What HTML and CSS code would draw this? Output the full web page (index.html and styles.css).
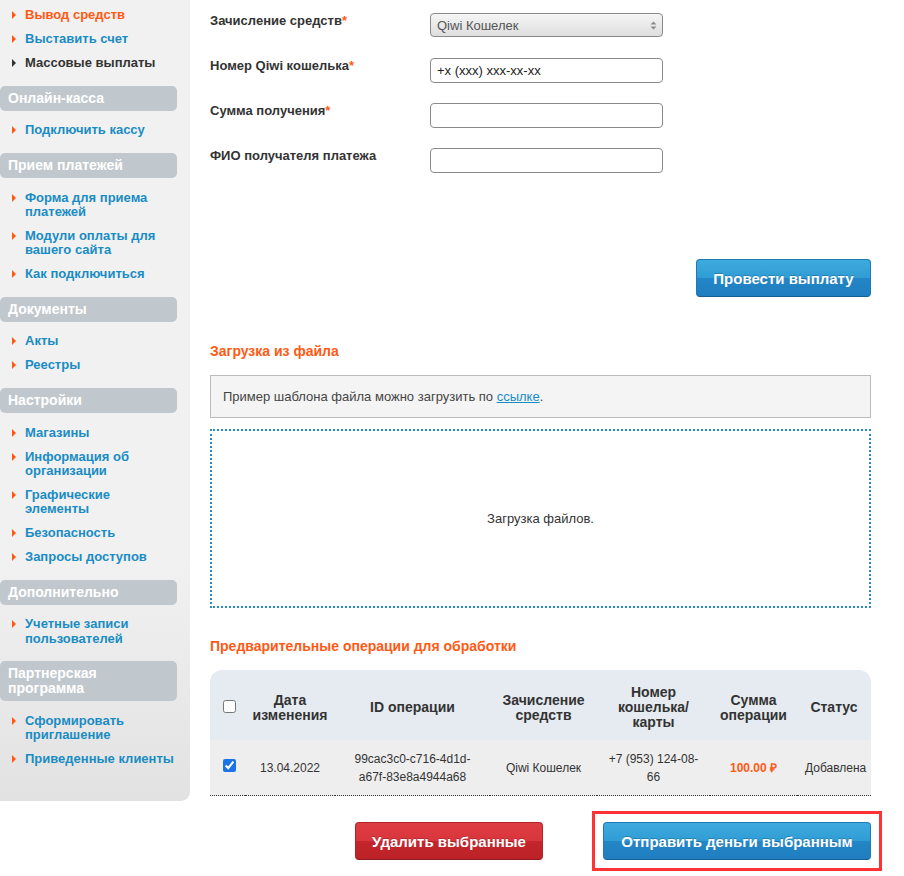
FILE: index.html
```html
<!DOCTYPE html>
<html lang="ru">

<head>
    <meta charset="UTF-8">
    <title>Массовые выплаты</title>
    <link rel="stylesheet" href="styles.css">
</head>

<body>
    <div class="page">
        <aside class="sidebar">
            <ul class="menu">
                <li class="active"><a href="#">Вывод средств</a></li>
                <li><a href="#">Выставить счет</a></li>
                <li class="current"><a href="#">Массовые выплаты</a></li>
            </ul>

            <div class="menu-title">Онлайн-касса</div>
            <ul class="menu">
                <li><a href="#">Подключить кассу</a></li>
            </ul>

            <div class="menu-title">Прием платежей</div>
            <ul class="menu">
                <li><a href="#">Форма для приема платежей</a></li>
                <li><a href="#">Модули оплаты для вашего сайта</a></li>
                <li><a href="#">Как подключиться</a></li>
            </ul>

            <div class="menu-title">Документы</div>
            <ul class="menu">
                <li><a href="#">Акты</a></li>
                <li><a href="#">Реестры</a></li>
            </ul>

            <div class="menu-title">Настройки</div>
            <ul class="menu">
                <li><a href="#">Магазины</a></li>
                <li><a href="#">Информация об организации</a></li>
                <li><a href="#">Графические элементы</a></li>
                <li><a href="#">Безопасность</a></li>
                <li><a href="#">Запросы доступов</a></li>
            </ul>

            <div class="menu-title">Дополнительно</div>
            <ul class="menu">
                <li><a href="#">Учетные записи пользователей</a></li>
            </ul>

            <div class="menu-title">Партнерская программа</div>
            <ul class="menu last">
                <li><a href="#">Сформировать приглашение</a></li>
                <li><a href="#">Приведенные клиенты</a></li>
            </ul>
        </aside>

        <main class="content">
            <form class="payout-form">
                <div class="form-row">
                    <label>Зачисление средств<span class="req">*</span></label>
                    <div class="select-wrap">
                        <select class="field select">
                            <option>Qiwi Кошелек</option>
                        </select>
                        <svg class="select-arrow" width="7" height="9" viewBox="0 0 7 9">
                            <path d="M3.5 0.5 L6.5 3.5 H0.5 Z M3.5 8.5 L6.5 5.5 H0.5 Z" fill="#8a8a8a"/>
                        </svg>
                    </div>
                </div>
                <div class="form-row">
                    <label>Номер Qiwi кошелька<span class="req">*</span></label>
                    <input class="field" type="text" value="+x (xxx) xxx-xx-xx">
                </div>
                <div class="form-row">
                    <label>Сумма получения<span class="req">*</span></label>
                    <input class="field" type="text">
                </div>
                <div class="form-row">
                    <label>ФИО получателя платежа</label>
                    <input class="field" type="text">
                </div>

                <div class="form-actions">
                    <button type="button" class="btn btn-blue">Провести выплату</button>
                </div>
            </form>

            <h2 class="section-title">Загрузка из файла</h2>
            <div class="note">Пример шаблона файла можно загрузить по <a href="#">ссылке</a>.</div>
            <div class="dropzone">Загрузка файлов.</div>

            <h2 class="section-title">Предварительные операции для обработки</h2>
            <table class="ops">
                <colgroup>
                    <col style="width:35px">
                    <col style="width:90px">
                    <col style="width:155px">
                    <col style="width:107px">
                    <col style="width:113px">
                    <col style="width:87px">
                    <col style="width:74px">
                </colgroup>
                <thead>
                    <tr>
                        <th class="check-cell"><input type="checkbox"></th>
                        <th>Дата изменения</th>
                        <th>ID операции</th>
                        <th>Зачисление средств</th>
                        <th>Номер кошелька/ карты</th>
                        <th>Сумма операции</th>
                        <th>Статус</th>
                    </tr>
                </thead>
                <tbody>
                    <tr>
                        <td class="check-cell"><input type="checkbox" checked></td>
                        <td>13.04.2022</td>
                        <td>99cac3c0-c716-4d1d-a67f-83e8a4944a68</td>
                        <td>Qiwi Кошелек</td>
                        <td>+7 (953) 124-08-66</td>
                        <td class="sum">100.00 ₽</td>
                        <td>Добавлена</td>
                    </tr>
                </tbody>
            </table>

            <div class="bottom-actions">
                <button type="button" class="btn btn-red">Удалить выбранные</button>
                <div class="highlight">
                    <button type="button" class="btn btn-blue btn-wide">Отправить деньги выбранным</button>
                </div>
            </div>
        </main>
    </div>
</body>

</html>
```

FILE: styles.css
```css
body {
    margin: 0;
    font-family: "Liberation Sans", Arial, sans-serif;
    color: #333;
    background: #fff;
}

.page {
    display: flex;
    align-items: flex-start;
}

/* sidebar */
.sidebar {
    width: 190px;
    flex-shrink: 0;
    padding: 8px 0 35px;
    box-sizing: border-box;
    background: linear-gradient(#f1f1f1 70%, #e2e2e2);
    border-bottom-right-radius: 9px;
}

.menu {
    list-style: none;
    margin: 0 0 15.5px;
    padding: 0;
}

.menu.last {
    margin-bottom: 0;
}

.menu li {
    position: relative;
    padding-left: 25px;
    padding-right: 15px;
    font-size: 13px;
    font-weight: bold;
    line-height: 14.25px;
}

.menu li + li {
    margin-top: 9.75px;
}

.menu li::before {
    content: "";
    position: absolute;
    left: 12px;
    top: 3px;
    border-left: 4px solid #ff5a14;
    border-top: 4px solid transparent;
    border-bottom: 4px solid transparent;
}

.menu a {
    color: #1a8cc4;
    text-decoration: none;
}

.menu li.active a {
    color: #ff5a14;
}

.menu li.current a {
    color: #333;
}

.menu li.current::before {
    border-left-color: #333;
}

.menu-title {
    width: 177px;
    box-sizing: border-box;
    padding: 5px 8px;
    margin-bottom: 12.5px;
    background-color: #c1c8cd;
    border-radius: 5px;
    color: #fff;
    font-size: 14px;
    font-weight: bold;
    line-height: 15px;
}

/* main column */
.content {
    width: 661px;
    margin-left: 20px;
    padding: 13px 0 16px;
}

.form-row {
    display: flex;
    align-items: flex-start;
    margin-bottom: 20px;
}

.form-row label {
    width: 220px;
    font-size: 13px;
    font-weight: bold;
    line-height: 15px;
    color: #333;
}

.req {
    color: #ff5a14;
}

.field {
    width: 233px;
    height: 25px;
    box-sizing: border-box;
    border: 1px solid #8a8a8a;
    border-radius: 4px;
    padding: 0 6px;
    font-family: "Liberation Sans", Arial, sans-serif;
    font-size: 13px;
    color: #222;
    background: #fff;
}

.select-wrap {
    position: relative;
    height: 25px;
}

.select {
    height: 24px;
    appearance: none;
    -webkit-appearance: none;
    color: #555;
    background: linear-gradient(#f5f5f5, #dedede);
}

.select-arrow {
    position: absolute;
    right: 6px;
    top: 8px;
}

.form-row + .form-actions {
    margin-top: 86px;
}

.form-actions {
    display: flex;
    justify-content: flex-end;
}

.btn {
    height: 38px;
    padding: 0 15px;
    border-radius: 4px;
    color: #fff;
    font-family: "Liberation Sans", Arial, sans-serif;
    font-size: 15px;
    font-weight: bold;
    cursor: pointer;
    text-shadow: 0 -1px 0 rgba(0, 0, 0, 0.2);
}

.btn-blue {
    width: 175px;
    border: 1px solid #1f79b5;
    border-bottom-color: #175f91;
    background: linear-gradient(#3eaade, #2f9cd4 50%, #2386c6 50%, #1f7ebf);
}

.btn-wide {
    width: 268px;
}

.btn-red {
    width: 188px;
    border: 1px solid #b3232a;
    border-bottom-color: #8f1a1f;
    background: linear-gradient(#df3d44, #d8353c 50%, #c3262c 50%, #bb2227);
}

.section-title {
    margin: 46px 0 16px;
    font-size: 14px;
    line-height: 16px;
    color: #ff5a14;
}

.note {
    height: 43px;
    box-sizing: border-box;
    padding: 0 12px;
    border: 1px solid #bbb;
    background-color: #f4f4f4;
    font-size: 13px;
    line-height: 41px;
    color: #444;
}

.note a {
    color: #1a8cc4;
}

.dropzone {
    height: 179px;
    box-sizing: border-box;
    margin-top: 11px;
    border: 2px dotted #2a88c6;
    display: flex;
    align-items: center;
    justify-content: center;
    font-size: 13px;
    color: #333;
}

.dropzone + .section-title {
    margin-top: 30px;
}

/* operations table */
.ops {
    width: 661px;
    table-layout: fixed;
    border-collapse: separate;
    border-spacing: 0;
    text-align: center;
}

.ops th {
    height: 70px;
    padding: 5px 6px 0;
    box-sizing: border-box;
    background-color: #e6ebf1;
    font-size: 14px;
    line-height: 15px;
    color: #333;
}

.ops th:first-child {
    border-top-left-radius: 12px;
}

.ops th:last-child {
    border-top-right-radius: 12px;
}

.ops td {
    height: 54px;
    padding: 0 8px;
    background-color: #eeeeee;
    border-bottom: 1px dotted #333;
    font-size: 12px;
    line-height: 18px;
    color: #333;
}

.ops td:nth-child(3) {
    padding: 0 10px;
}

.ops th.check-cell {
    padding: 5px 0 0 4px;
}

.ops td.check-cell {
    padding: 1px 0 0 4px;
}

.ops input[type="checkbox"] {
    width: 13px;
    height: 13px;
    margin: 0;
    accent-color: #1a73e8;
}

.ops td.sum {
    color: #ff5a14;
    font-weight: bold;
}

.bottom-actions {
    display: flex;
    justify-content: flex-end;
    gap: 60px;
    margin-top: 26px;
}

.highlight {
    margin: -11px;
    padding: 8px;
    border: 3px solid #ff3333;
    display: flex;
}
```
